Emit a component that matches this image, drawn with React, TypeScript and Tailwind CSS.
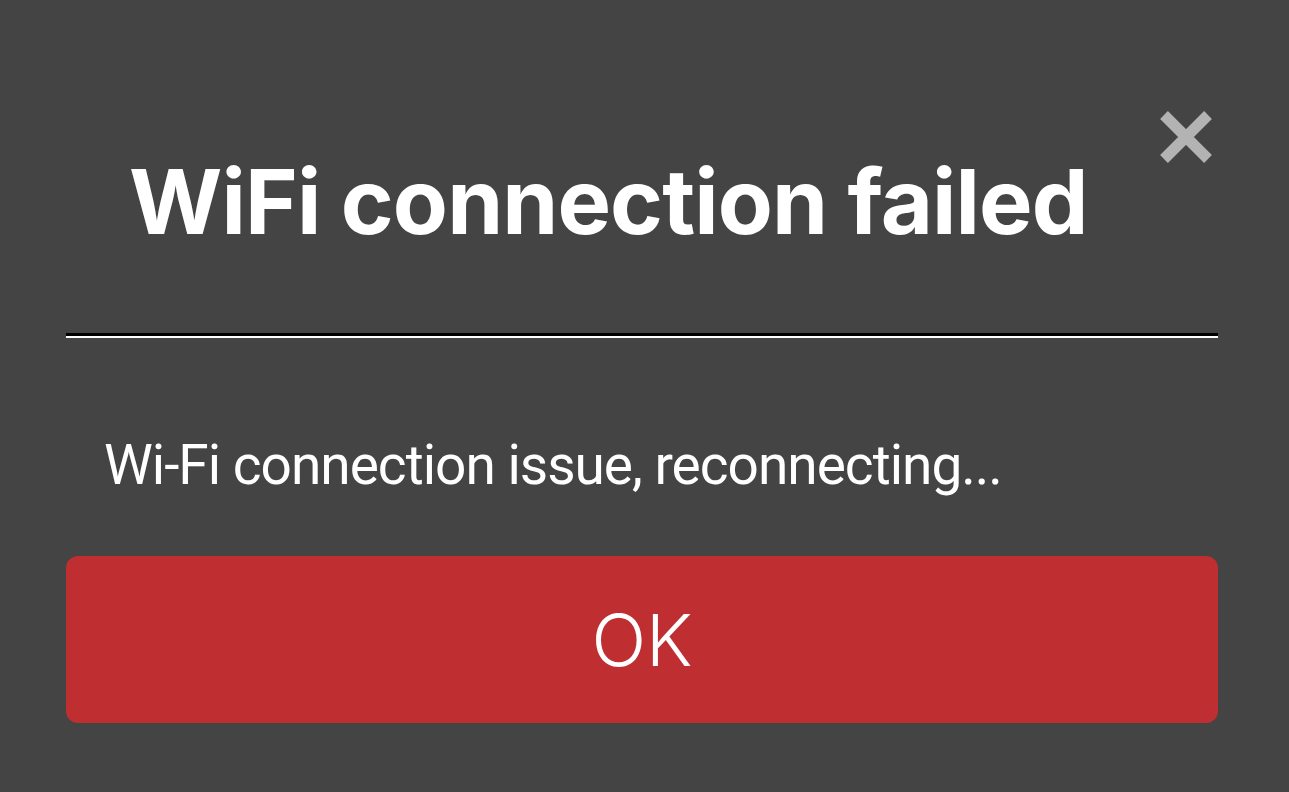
function CloseIcon() {
  return (
    <svg width="52" height="52" viewBox="0 0 52 52" fill="none">
      <path d="M4 4L48 48M48 4L4 48" stroke="currentColor" strokeWidth="11" />
    </svg>
  )
}

function App() {
  return (
    <div className="w-[1289px] h-[792px] bg-[#444444] overflow-hidden text-white">
      <div className="flex flex-col ml-[66px] w-[1152px]">
        <div className="relative h-[333px]">
          <h1 className="pt-[146px] pl-[63px] font-['Inter',sans-serif] text-[90px] font-bold leading-[112px] tracking-[-0.9px]">
            WiFi connection failed
          </h1>
          <button className="absolute right-[6px] top-[111px] text-[#b3b3b3]">
            <CloseIcon />
          </button>
        </div>
        <div className="h-[3px] bg-black" />
        <div className="h-[2px] bg-white" />
        <p className="mt-[92px] pl-[38px] font-['Roboto',sans-serif] text-[55px] font-normal leading-[70px] tracking-[-1px]">
          Wi-Fi connection issue, reconnecting...
        </p>
        <button className="mt-[56px] h-[167px] rounded-[12px] bg-[#bf2e30] font-['Inter',sans-serif] text-[72px] font-light leading-none">
          OK
        </button>
      </div>
    </div>
  )
}

export default App
